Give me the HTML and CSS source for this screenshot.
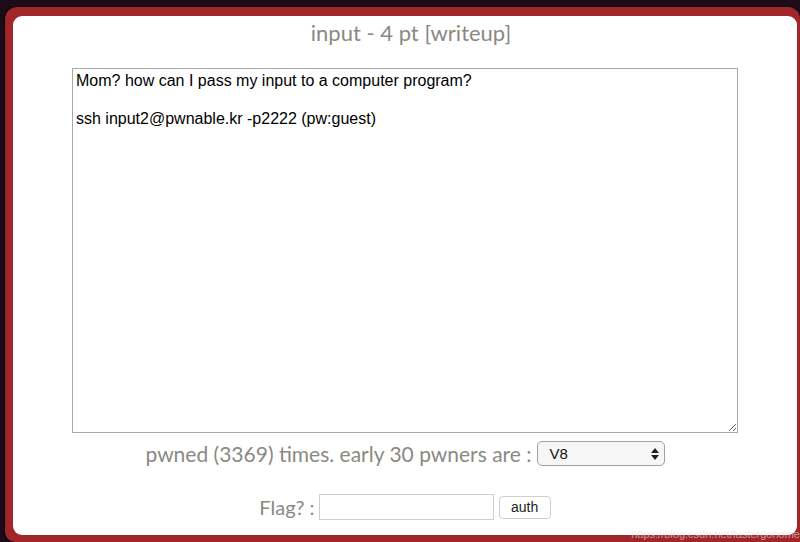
FILE: index.html
```html
<!DOCTYPE html>
<html>
<head>
<meta charset="utf-8">
<title>input - 4 pt</title>
<link rel="stylesheet" href="styles.css">
</head>
<body>
<div class="frame">
  <div class="panel">
    <h1 class="title">input - 4 pt [writeup]</h1>
    <textarea class="desc" readonly>Mom? how can I pass my input to a computer program?

ssh input2@pwnable.kr -p2222 (pw:guest)</textarea>
    <div class="row pwners">
      <span>pwned (3369) times. early 30 pwners are :</span>
      <div class="select">
        <span>V8</span>
        <svg class="arrows" width="8" height="12" viewBox="0 0 8 12"><path d="M4 0 L8 5 H0 Z M0 7 H8 L4 12 Z" fill="#222"/></svg>
      </div>
    </div>
    <div class="row flag">
      <span>Flag? :</span>
      <input class="flag-input" type="text">
      <button class="auth">auth</button>
    </div>
  </div>
  <div class="mark">https://blog.csdn.net/fastergohome</div>
</div>
</body>
</html>
```
FILE: styles.css
```css
html, body {
  margin: 0;
  padding: 0;
  background: #1b0c17;
  height: 542px;
  overflow: hidden;
}

.frame {
  position: relative;
  margin: 7px 0 0 5px;
  height: 535px;
  box-sizing: border-box;
  padding: 9px 3px 7px 8px;
  background: #a1262a;
  border-radius: 12px 12px 0 10px;
  box-shadow: -1px 0 1px #000;
}

.panel {
  height: 100%;
  background: #fff;
  border-radius: 9px;
  display: flex;
  flex-direction: column;
  align-items: center;
  font-family: Lato, "Open Sans", sans-serif;
  color: #8a8982;
}

.title {
  margin: 3px 0 0 12px;
  font-size: 22px;
  font-weight: normal;
  line-height: 28px;
}

.desc {
  margin-top: 21px;
  width: 666px;
  height: 365px;
  box-sizing: border-box;
  border: 1px solid #a9a9a9;
  padding: 2px 3px;
  font-family: "Liberation Sans", Arial, sans-serif;
  font-size: 16px;
  line-height: 19px;
  color: #000;
  resize: both;
  outline: none;
}

.row {
  display: flex;
  align-items: center;
  font-size: 20px;
}

.pwners {
  margin-top: 8px;
  height: 25px;
  font-size: 21px;
}

.select {
  margin-left: 5px;
  width: 128px;
  height: 25px;
  box-sizing: border-box;
  border: 1px solid #a0a0a0;
  border-radius: 5px;
  background: #f6f6f6;
  display: flex;
  align-items: center;
  justify-content: space-between;
  padding: 0 5px 0 12px;
  font-family: "Liberation Sans", Arial, sans-serif;
  font-size: 15px;
  color: #111;
}

.flag {
  margin-top: 28px;
  height: 26px;
}

.flag-input {
  margin: 0 0 0 4px;
  width: 175px;
  height: 26px;
  box-sizing: border-box;
  border: 1px solid #cfcfcf;
  padding: 0;
}

.auth {
  margin-left: 5px;
  width: 52px;
  height: 23px;
  box-sizing: border-box;
  border: 1px solid #cfcfcf;
  border-radius: 4px;
  background: #fff;
  font-family: "Liberation Sans", Arial, sans-serif;
  font-size: 14px;
  color: #222;
  padding: 0;
}

.mark {
  position: absolute;
  right: 0;
  bottom: 2px;
  font-family: "Liberation Sans", Arial, sans-serif;
  font-size: 11px;
  color: rgba(225, 225, 225, 0.6);
  white-space: nowrap;
}
```
